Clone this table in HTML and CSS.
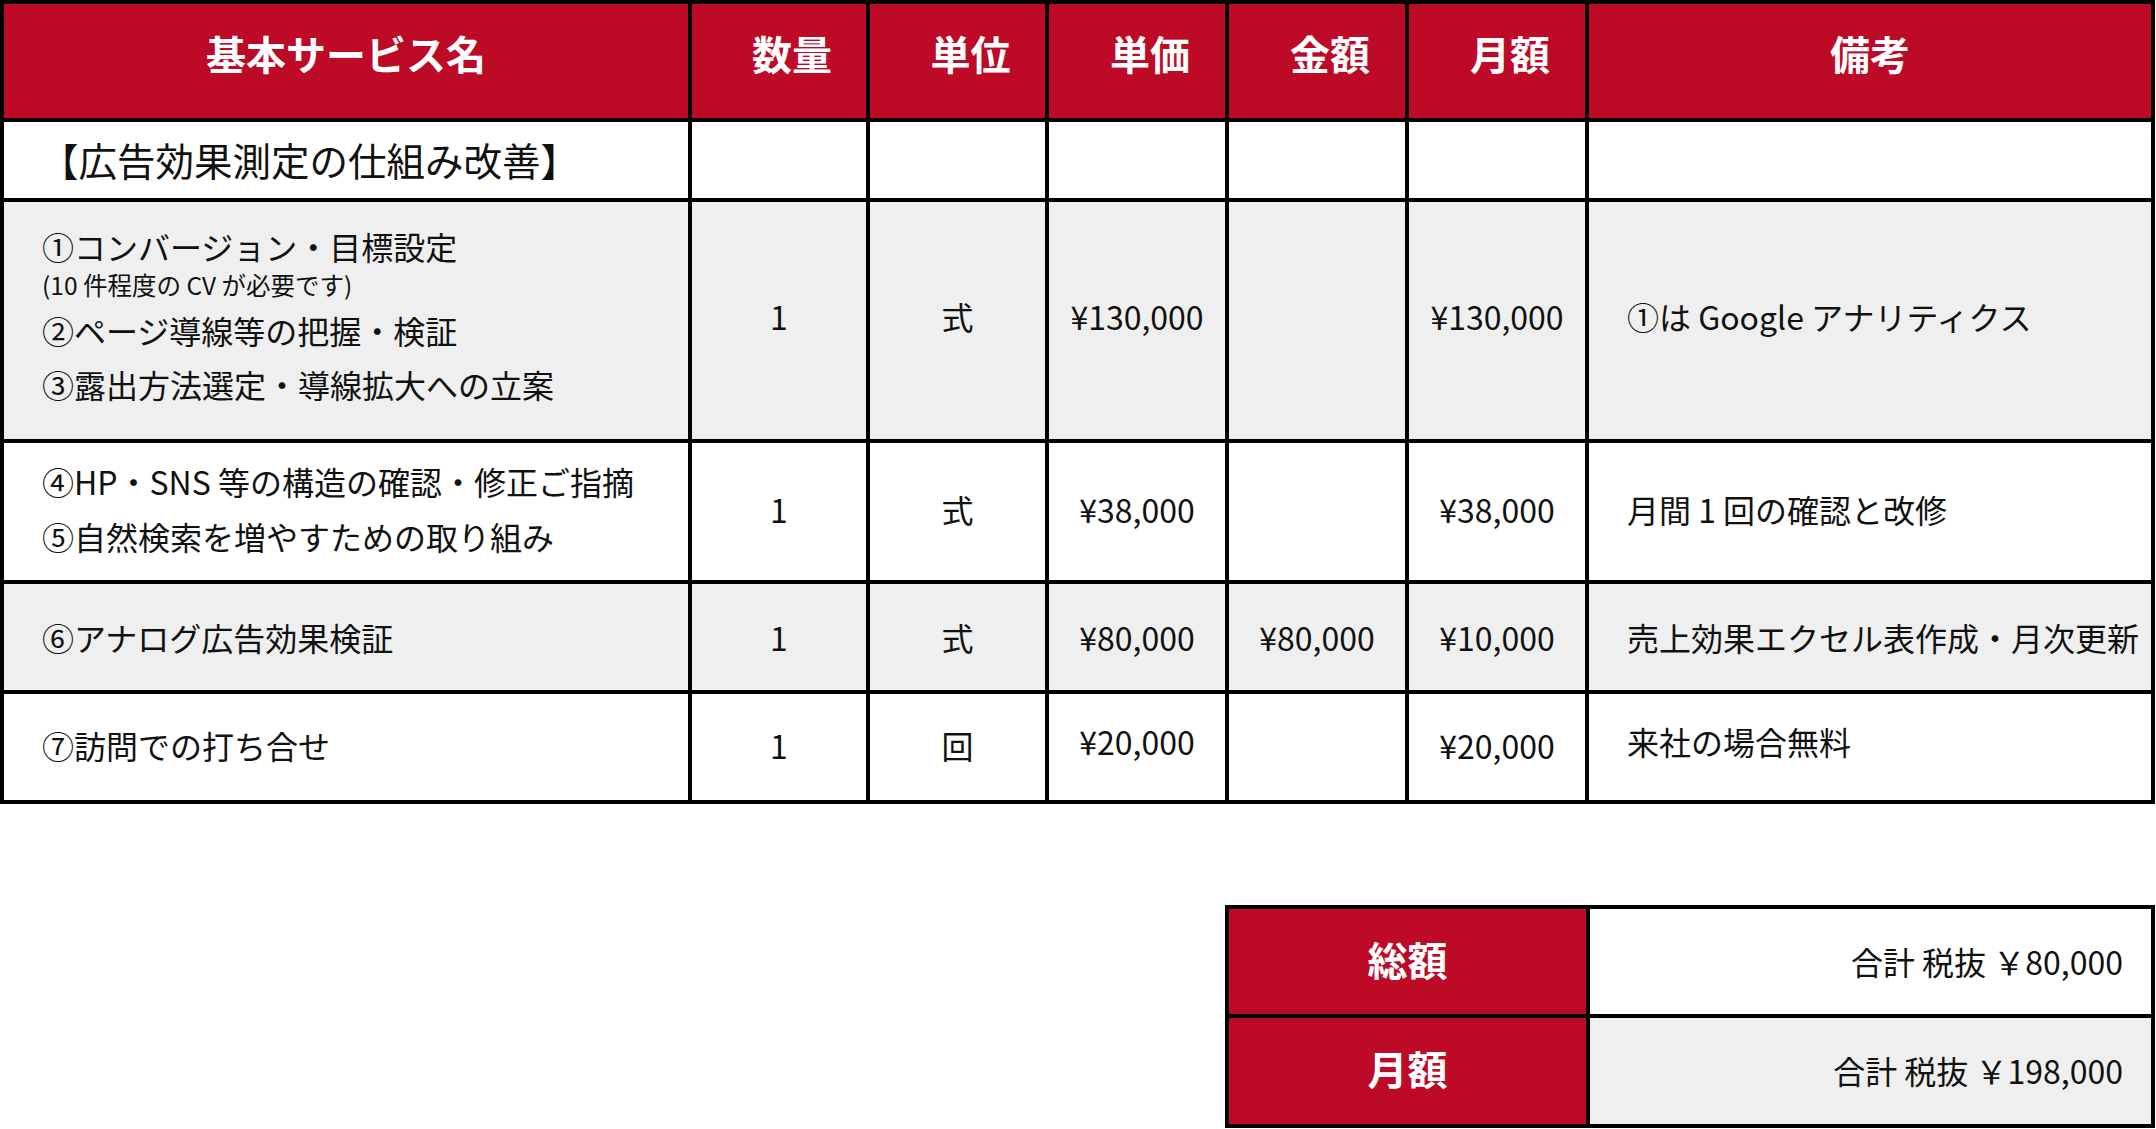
FILE: index.html
```html
<!DOCTYPE html>
<html lang="ja">
<head>
<meta charset="utf-8">
<title>基本サービス見積</title>
<link rel="stylesheet" href="styles.css">
</head>
<body>
<div class="page">
  <table class="quote">
    <colgroup>
      <col class="c-name">
      <col class="c-qty">
      <col class="c-unit">
      <col class="c-price">
      <col class="c-amount">
      <col class="c-month">
      <col class="c-note">
    </colgroup>
    <thead>
      <tr class="row-head">
        <th>基本サービス名</th>
        <th class="shift">数量</th>
        <th class="shift">単位</th>
        <th class="shift">単価</th>
        <th class="shift">金額</th>
        <th class="shift">月額</th>
        <th>備考</th>
      </tr>
    </thead>
    <tbody>
      <tr class="row-title">
        <td class="name title">【広告効果測定の仕組み改善】</td>
        <td></td><td></td><td></td><td></td><td></td><td></td>
      </tr>
      <tr class="row-a gray">
        <td class="name">
          <div class="l1">①コンバージョン・目標設定</div>
          <div class="small">(10 件程度の CV が必要です)</div>
          <div class="l2">②ページ導線等の把握・検証</div>
          <div class="l2">③露出方法選定・導線拡大への立案</div>
        </td>
        <td class="num">1</td>
        <td class="num">式</td>
        <td class="num">¥130,000</td>
        <td class="num"></td>
        <td class="num">¥130,000</td>
        <td class="note">①は Google アナリティクス</td>
      </tr>
      <tr class="row-b">
        <td class="name">
          <div class="l3">④HP・SNS 等の構造の確認・修正ご指摘</div>
          <div class="l3">⑤自然検索を増やすための取り組み</div>
        </td>
        <td class="num">1</td>
        <td class="num">式</td>
        <td class="num">¥38,000</td>
        <td class="num"></td>
        <td class="num">¥38,000</td>
        <td class="note">月間 1 回の確認と改修</td>
      </tr>
      <tr class="row-c gray">
        <td class="name">⑥アナログ広告効果検証</td>
        <td class="num">1</td>
        <td class="num">式</td>
        <td class="num">¥80,000</td>
        <td class="num">¥80,000</td>
        <td class="num">¥10,000</td>
        <td class="note">売上効果エクセル表作成・月次更新</td>
      </tr>
      <tr class="row-d">
        <td class="name">⑦訪問での打ち合せ</td>
        <td class="num">1</td>
        <td class="num">回</td>
        <td class="num raised">¥20,000</td>
        <td class="num"></td>
        <td class="num">¥20,000</td>
        <td class="note raised">来社の場合無料</td>
      </tr>
    </tbody>
  </table>

  <div class="summary-wrap">
    <table class="summary">
      <colgroup>
        <col class="s-label">
        <col class="s-value">
      </colgroup>
      <tbody>
        <tr class="s-row s-first">
          <th>総額</th>
          <td>合計 税抜 ￥80,000</td>
        </tr>
        <tr class="s-row gray">
          <th>月額</th>
          <td>合計 税抜 ￥198,000</td>
        </tr>
      </tbody>
    </table>
  </div>
</div>
</body>
</html>
```
FILE: styles.css
```css
html, body {
  margin: 0;
  padding: 0;
  background: #ffffff;
}

body {
  font-family: "Noto Sans CJK JP", "Noto Sans", sans-serif;
  color: #111111;
}

.page {
  width: 2155px;
}

table {
  border-collapse: collapse;
  table-layout: fixed;
}

.quote {
  width: 2155px;
}

.c-name { width: 688px; }
.c-qty { width: 178px; }
.c-unit { width: 179px; }
.c-price { width: 180px; }
.c-amount { width: 180px; }
.c-month { width: 180px; }
.c-note { width: 566px; }

.quote th,
.quote td,
.summary th,
.summary td {
  border: 4px solid #000000;
  padding: 0;
  vertical-align: middle;
}

.quote th {
  background: #bc0a27;
  color: #ffffff;
  font-weight: 700;
  font-size: 40px;
  line-height: 56px;
  text-align: center;
  padding-bottom: 16px;
}

.quote th.shift {
  padding-left: 26px;
}

.row-head th { height: 98px; }

.row-title td {
  height: 74px;
  padding-bottom: 2px;
}

.row-a td {
  height: 231px;
  padding-bottom: 6px;
}

.row-a td.num,
.row-a td.note {
  height: 227px;
  padding-bottom: 10px;
}

.row-b td {
  height: 131px;
  padding-bottom: 6px;
}

.row-c td {
  height: 106px;
}

.row-d td {
  height: 102px;
  padding-bottom: 4px;
}

.row-d td.raised {
  height: 94px;
  padding-bottom: 12px;
}

.gray td {
  background: #efefef;
}

.quote td {
  font-size: 32px;
  line-height: 54px;
}

.quote td.name,
.quote td.note {
  padding-left: 38px;
  text-align: left;
  white-space: nowrap;
}

.quote td.title {
  font-size: 38.5px;
  line-height: 50px;
  padding-left: 36px;
}

.quote td.num {
  text-align: center;
}

.l1 {
  line-height: 42px;
}

.small {
  font-size: 24.5px;
  line-height: 36px;
}

.l2 {
  line-height: 54px;
}

.l3 {
  line-height: 55px;
}

.summary-wrap {
  display: flex;
  justify-content: flex-end;
  padding-top: 101px;
}

.summary {
  width: 930px;
}

.s-label { width: 361px; }
.s-value { width: 565px; }

.summary th {
  background: #bc0a27;
  color: #ffffff;
  font-weight: 700;
  font-size: 40px;
  text-align: center;
  padding-bottom: 6px;
}

.summary td {
  font-size: 32px;
  text-align: right;
  padding-right: 28px;
  padding-bottom: 2px;
  background: #ffffff;
}

.summary .gray td {
  background: #efefef;
}

.s-row th {
  height: 100px;
}

.s-row td {
  height: 104px;
}

.s-first th {
  height: 99px;
}

.s-first td {
  height: 103px;
}
```
